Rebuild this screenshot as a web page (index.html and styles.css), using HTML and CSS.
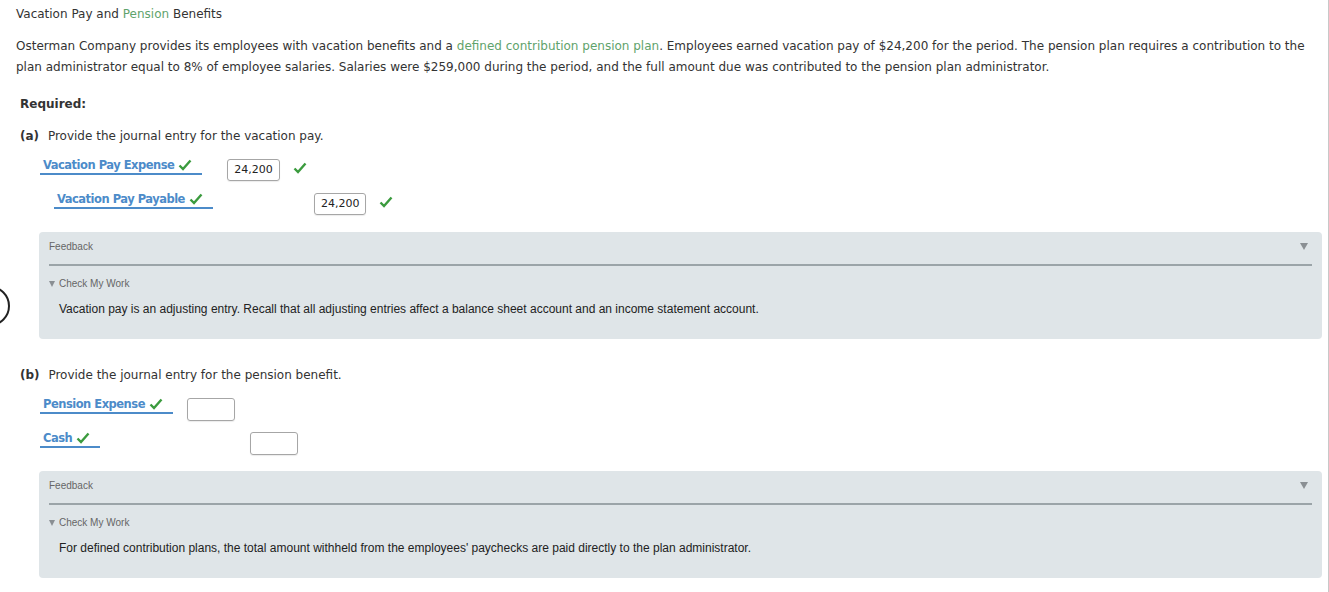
FILE: index.html
```html
<!DOCTYPE html>
<html lang="en">
<head>
  <meta charset="UTF-8" />
  <meta name="viewport" content="width=device-width, initial-scale=1.0"/>
  <title>Vacation Pay and Pension Benefits</title>
  <link rel="stylesheet" href="styles.css">
</head>
<body>
  <div class="page">
    <h1 class="title">Vacation Pay and <span class="term">Pension</span> Benefits</h1>

    <p class="stem">Osterman Company provides its employees with vacation benefits and a <span class="term">defined contribution pension plan</span>. Employees earned vacation pay of $24,200 for the period. The pension plan requires a contribution to the plan administrator equal to 8% of employee salaries. Salaries were $259,000 during the period, and the full amount due was contributed to the pension plan administrator.</p>

    <div class="required">Required:</div>

    <div class="part">
      <div class="prompt"><b>(a)</b> Provide the journal entry for the vacation pay.</div>
      <div class="journal">
        <div class="row debit">
          <span class="account">Vacation Pay Expense <svg class="check" viewBox="0 0 14 12"><path d="M1.5 6.5 L5 10 L12.5 1.5"/></svg></span>
          <span class="amount a-debit">24,200</span>
          <svg class="check mark" viewBox="0 0 14 12"><path d="M1.5 6.5 L5 10 L12.5 1.5"/></svg>
        </div>
        <div class="row credit">
          <span class="account">Vacation Pay Payable <svg class="check" viewBox="0 0 14 12"><path d="M1.5 6.5 L5 10 L12.5 1.5"/></svg></span>
          <span class="amount a-credit">24,200</span>
          <svg class="check mark" viewBox="0 0 14 12"><path d="M1.5 6.5 L5 10 L12.5 1.5"/></svg>
        </div>
      </div>

      <div class="feedback">
        <div class="fb-head">Feedback <span class="fb-toggle"></span></div>
        <div class="fb-check"><span class="tri"></span>Check My Work</div>
        <div class="fb-text">Vacation pay is an adjusting entry. Recall that all adjusting entries affect a balance sheet account and an income statement account.</div>
        <span class="bubble"></span>
      </div>
    </div>

    <div class="part">
      <div class="prompt"><b>(b)</b> Provide the journal entry for the pension benefit.</div>
      <div class="journal">
        <div class="row">
          <span class="account">Pension Expense <svg class="check" viewBox="0 0 14 12"><path d="M1.5 6.5 L5 10 L12.5 1.5"/></svg></span>
          <span class="amount empty b-debit"></span>
        </div>
        <div class="row">
          <span class="account">Cash <svg class="check" viewBox="0 0 14 12"><path d="M1.5 6.5 L5 10 L12.5 1.5"/></svg></span>
          <span class="amount empty b-credit"></span>
        </div>
      </div>

      <div class="feedback">
        <div class="fb-head">Feedback <span class="fb-toggle"></span></div>
        <div class="fb-check"><span class="tri"></span>Check My Work</div>
        <div class="fb-text">For defined contribution plans, the total amount withheld from the employees' paychecks are paid directly to the plan administrator.</div>
      </div>
    </div>
  </div>
</body>
</html>
```

FILE: styles.css
```css
* {
  margin: 0; padding: 0; box-sizing: border-box;
}
body {
  background: #fff;
  color: #333;
  font-family: 'DejaVu Sans', Verdana, sans-serif;
  font-size: 12px;
}
.page {
  width: 1329px;
  height: 592px;
  padding: 4px 0 0 16px;
  border-right: 1px solid #c8c8c8;
  overflow: hidden;
  position: relative;
}
.title {
  font-size: 12px;
  font-weight: normal;
  line-height: 21px;
}
.term {
  color: #5fa36c;
}
.stem {
  margin-top: 11px;
  line-height: 21px;
  padding-right: 12px;
}
.required {
  margin: 16px 0 0 4px;
  font-weight: bold;
  line-height: 21px;
}
.prompt {
  margin: 11px 0 0 4px;
  line-height: 21px;
}
.prompt b {
  margin-right: 5px;
}
.part + .part .prompt {
  margin-top: 26px;
}
.journal {
  display: flex;
  flex-direction: column;
  gap: 12px;
  margin: 10px 0 0 24px;
}
.row {
  display: flex;
  align-items: flex-start;
  height: 22px;
}
.credit .account {
  margin-left: 14px;
}
.account {
  color: #4c8bc9;
  font-weight: bold;
  font-size: 11.5px;
  letter-spacing: -0.5px;
  border-bottom: 2px solid #4c8bc9;
  padding: 0 10px 0 3px;
  line-height: 16px;
  display: inline-flex;
  align-items: center;
  gap: 4px;
}
.check {
  width: 14px;
  height: 12px;
  fill: none;
  stroke: #3b9b3e;
  stroke-width: 2.4;
}
.mark {
  margin-top: 5px;
}
.amount {
  display: inline-block;
  margin-top: 2px;
  height: 22px;
  line-height: 20px;
  border: 1px solid #a6a6a6;
  border-radius: 3px;
  padding: 0 6px;
  font-size: 11px;
  color: #222;
  margin-right: 13px;
  box-shadow: 0 1px 1px rgba(0,0,0,0.08);
}
.a-debit { margin-left: 25px; }
.a-credit { margin-left: 101px; }
.empty {
  width: 48px;
  height: 23px;
}
.b-debit { margin-left: 14px; }
.b-credit { margin-left: 150px; }
.feedback {
  position: relative;
  margin: 19px 6px 0 23px;
  background: #dfe5e8;
  border-radius: 4px;
  padding: 8px 10px 23px 10px;
  font-family: 'Liberation Sans', Arial, sans-serif;
}
.fb-head {
  font-size: 10px;
  color: #666;
  line-height: 14px;
  padding-bottom: 10px;
  border-bottom: 2px solid #9ba4a8;
  position: relative;
}
.fb-toggle {
  position: absolute;
  right: 4px;
  top: 3px;
  border-left: 4px solid transparent;
  border-right: 4px solid transparent;
  border-top: 7px solid #8a8f93;
}
.fb-check {
  margin-top: 11px;
  font-size: 10px;
  color: #666;
  line-height: 14px;
  display: flex;
  align-items: center;
  gap: 4px;
}
.tri {
  border-left: 3px solid transparent;
  border-right: 3px solid transparent;
  border-top: 6px solid #8a8f93;
}
.fb-text {
  margin-top: 11px;
  margin-left: 10px;
  font-size: 12px;
  color: #222;
  line-height: 14px;
}
.bubble {
  position: absolute;
  left: -69px;
  top: 54px;
  width: 40px;
  height: 40px;
  border: 2px solid #222;
  border-radius: 50%;
}
```
